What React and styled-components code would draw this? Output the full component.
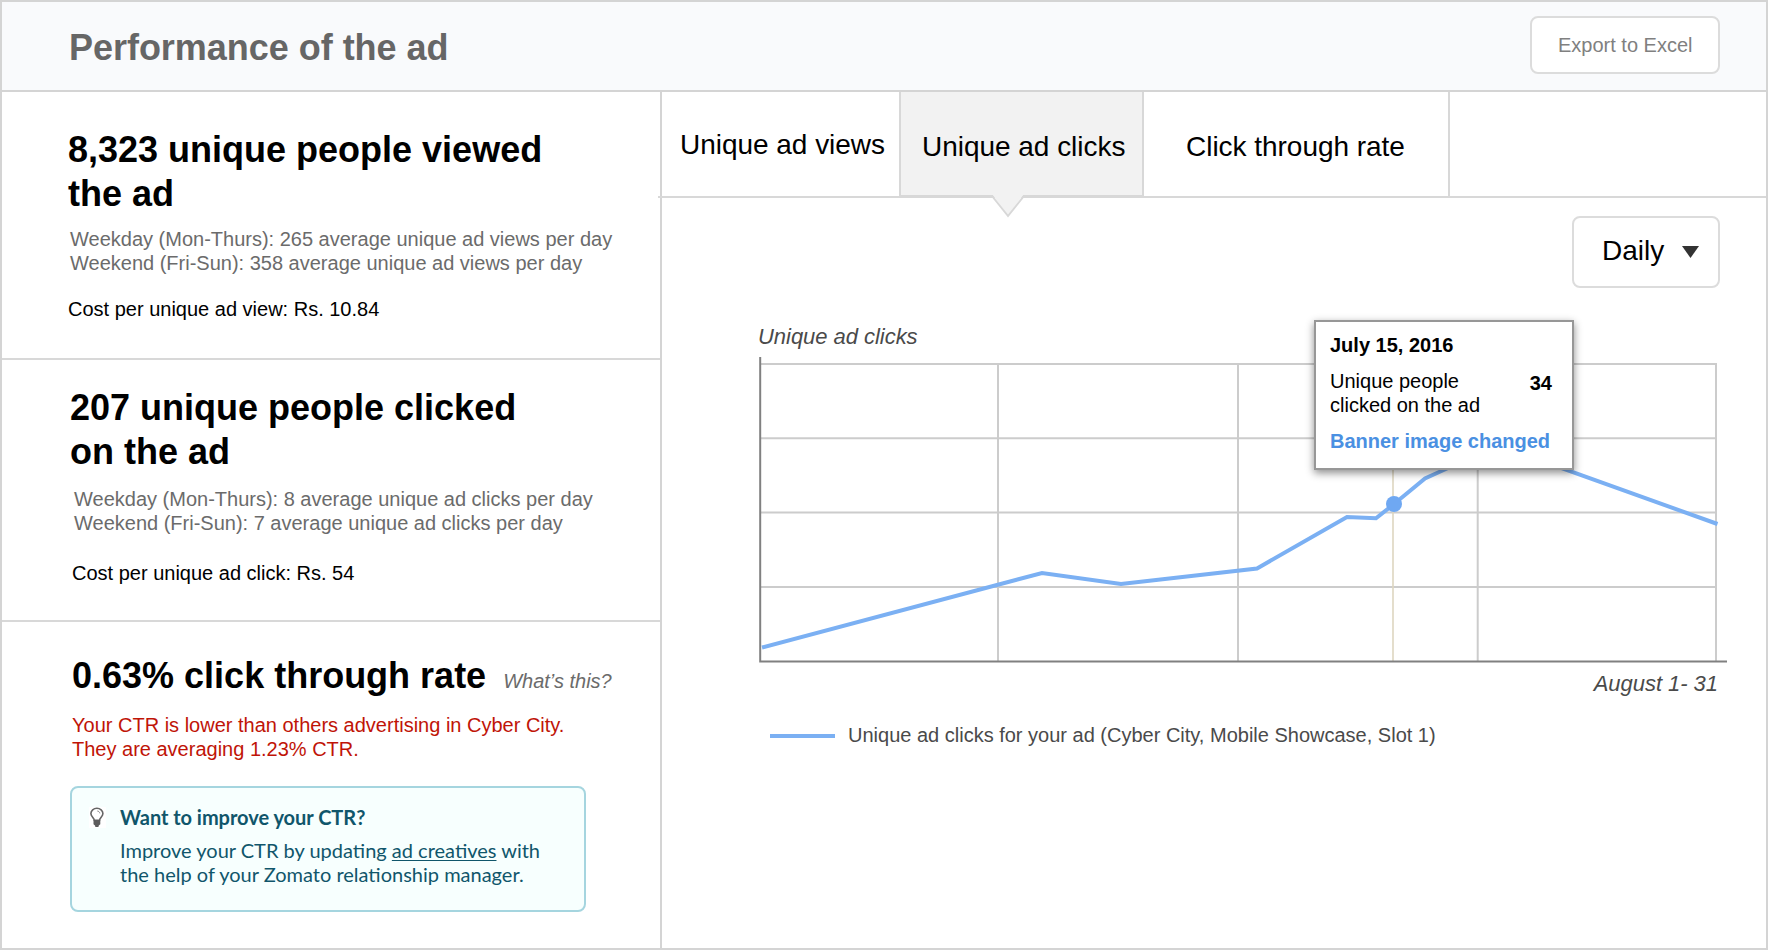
import React from "react";
import styled, { createGlobalStyle } from "styled-components";

const GlobalStyle = createGlobalStyle`
  * { box-sizing: border-box; }
  body { margin: 0; background: #fff; }
  h1, h2, h3, p { margin: 0; }
  button { appearance: none; font: inherit; margin: 0; padding: 0; }
`;

const Page = styled.div`
  width: 1768px;
  height: 950px;
  border: 2px solid #d4d4d4;
  background: #fff;
  color: #000;
  font-family: "Liberation Sans", Arial, sans-serif;
  font-size: 20px;
  line-height: 24px;
  display: flex;
  flex-direction: column;
  overflow: hidden;
`;

const Header = styled.header`
  height: 90px;
  flex: none;
  display: flex;
  justify-content: space-between;
  align-items: flex-start;
  padding: 14px 46px 0 67px;
  background: #f9fafc;
  border-bottom: 2px solid #d4d4d4;
`;

const Title = styled.h1`
  margin-top: 10px;
  font-size: 36px;
  line-height: 44px;
  letter-spacing: -0.03px;
  color: #666;
`;

const OutlineButton = styled.button`
  width: ${(p) => p.$w}px;
  height: ${(p) => p.$h}px;
  padding: 0 0 ${(p) => p.$lift || 0}px ${(p) => p.$inset}px;
  display: flex;
  align-items: center;
  background: #fff;
  border: 2px solid #dcdcdc;
  border-radius: 8px;
  color: ${(p) => p.$color || "#000"};
  font-size: ${(p) => p.$size}px;
`;

const Body = styled.div`
  flex: 1;
  display: flex;
  min-height: 0;
`;

const Summary = styled.aside`
  width: 660px;
  flex: none;
  border-right: 2px solid #d4d4d4;
  display: flex;
  flex-direction: column;
`;

const Section = styled.section`
  height: ${(p) => (p.$h ? `${p.$h}px` : "auto")};
  padding: ${(p) => p.$top}px 0 0 ${(p) => p.$left}px;
  & + & { border-top: 2px solid #d8d8d8; }
`;

const Heading = styled.h2`
  font-size: 36px;
  line-height: 44px;
  white-space: nowrap;
`;

const HeadingRow = styled.div`
  display: flex;
  align-items: baseline;
  gap: 17px;
`;

const Hint = styled.a`
  font-style: italic;
  color: #6b6b6b;
`;

const Text = styled.p`
  margin: ${(p) => p.$gap}px 0 0 ${(p) => p.$indent || 0}px;
  color: ${(p) => p.$color || "#000"};
  white-space: nowrap;
`;

const Tip = styled.div`
  width: 516px;
  height: 126px;
  margin: 25px 0 0 -2px;
  padding: 16px 0 0 17px;
  display: flex;
  gap: 14px;
  background: #f7fffe;
  border: 2px solid #a5d5df;
  border-radius: 8px;
  color: #10566b;
  font-family: Lato, sans-serif;
`;

const BulbIcon = styled.svg`
  width: 17px;
  height: 21px;
  margin-top: 3px;
  flex: none;
`;

const TipTitle = styled.h3`
  margin-top: 1px;
  font-size: 20px;
  line-height: 24px;
  letter-spacing: -0.03px;
`;

const TipText = styled.p`
  margin-top: 9px;
  white-space: nowrap;
`;

const TipLink = styled.a`
  text-decoration: underline;
  text-decoration-thickness: 1px;
  text-underline-offset: 2px;
`;

const Report = styled.main`
  flex: 1;
  display: flex;
  flex-direction: column;
`;

const Tabs = styled.nav`
  height: 106px;
  flex: none;
  display: flex;
  margin-left: -4px;
  padding-left: 4px;
  border-bottom: 2px solid #d8d8d8;
`;

const Tab = styled.button`
  position: relative;
  width: ${(p) => p.$w}px;
  height: ${(p) => (p.$active ? 105 : 104)}px;
  padding: ${(p) => p.$top}px 0 0 ${(p) => p.$left}px;
  display: flex;
  align-items: flex-start;
  white-space: nowrap;
  font-size: 28px;
  line-height: 32px;
  letter-spacing: -0.03px;
  color: #000;
  border: 0 solid #d8d8d8;
  border-right-width: 2px;
  background: #fff;
  ${(p) => p.$active && "background: #f2f2f2; border-bottom-width: 2px;"}
`;

const TabPointer = styled.svg`
  position: absolute;
  left: 90px;
  top: 102px;
  width: 34px;
  height: 24px;
`;

const Content = styled.div`
  padding: 18px 38px 0 96px;
  display: flex;
  flex-direction: column;
`;

const Controls = styled.div`
  display: flex;
  justify-content: flex-end;
  padding-right: 8px;
`;

const Caret = styled.svg`
  width: 17px;
  height: 12px;
  margin: 2px 0 0 18px;
`;

const AxisLabel = styled.div`
  font-size: 22px;
  line-height: 26px;
  font-style: italic;
  letter-spacing: -0.04px;
  color: #4a4a4a;
  margin-top: ${(p) => p.$gap}px;
  text-align: ${(p) => p.$align || "left"};
  padding-right: ${(p) => (p.$align ? 10 : 0)}px;
`;

const ChartArea = styled.div`
  position: relative;
  height: 320px;
  margin-top: -1px;
`;

const Plot = styled.svg`
  display: block;
  width: 970px;
  height: 320px;
`;

const Tooltip = styled.div`
  position: absolute;
  left: 556px;
  top: -29px;
  width: 260px;
  height: 150px;
  padding: 11px 20px 0 14px;
  background: #fff;
  border: 2px solid #979797;
  box-shadow: 0 3px 8px rgba(0, 0, 0, 0.45);
`;

const TooltipRow = styled.div`
  display: flex;
  justify-content: space-between;
  margin-top: 12px;
`;

const TooltipValue = styled.strong`
  margin-top: 2px;
`;

const TooltipNote = styled.strong`
  display: block;
  margin-top: 12px;
  color: #4a90e2;
  white-space: nowrap;
`;

const Legend = styled.div`
  display: flex;
  align-items: center;
  gap: 13px;
  margin-top: 26px;
  padding-left: 12px;
  color: #4a4a4a;
`;

const LegendSwatch = styled.span`
  width: 65px;
  height: 4px;
  margin-top: 2px;
  background: #7bb0f3;
`;

const ROWS = [364, 438.3, 512.6, 587];
const COLUMNS = [998, 1238, 1477.7, 1716];
const SERIES =
  "762,647.5 1042,573 1121,584 1257,568.5 1347,517 1376,518.3 1394,504 1425,478.5 1448,468 1500,446 1717.5,524";

export default function App() {
  return (
    <>
      <GlobalStyle />
      <Page>
        <Header>
          <Title>Performance of the ad</Title>
          <OutlineButton $w={190} $h={58} $inset={26} $size={20} $color="#808080">
            Export to Excel
          </OutlineButton>
        </Header>
        <Body>
          <Summary>
            <Section $h={266} $top={36} $left={66}>
              <Heading>8,323 unique people viewed<br />the ad</Heading>
              <Text $gap={11} $indent={2} $color="#6b6b6b">
                Weekday (Mon-Thurs): 265 average unique ad views per day<br />
                Weekend (Fri-Sun): 358 average unique ad views per day
              </Text>
              <Text $gap={22}>Cost per unique ad view: Rs. 10.84</Text>
            </Section>
            <Section $h={262} $top={26} $left={68}>
              <Heading>207 unique people clicked<br />on the ad</Heading>
              <Text $gap={13} $indent={4} $color="#6b6b6b">
                Weekday (Mon-Thurs): 8 average unique ad clicks per day<br />
                Weekend (Fri-Sun): 7 average unique ad clicks per day
              </Text>
              <Text $gap={26} $indent={2}>Cost per unique ad click: Rs. 54</Text>
            </Section>
            <Section $top={32} $left={70}>
              <HeadingRow>
                <Heading>0.63% click through rate</Heading>
                <Hint>What’s this?</Hint>
              </HeadingRow>
              <Text $gap={15} $color="#c01407">
                Your CTR is lower than others advertising in Cyber City.<br />
                They are averaging 1.23% CTR.
              </Text>
              <Tip>
                <BulbIcon viewBox="0 0 17 21">
                  <rect width="17" height="21" fill="#fff" />
                  <path
                    d="M5.3 13.2C4.9 10.6 1.9 9.4 1.9 6.5a6 5.2 0 0 1 12 0c0 2.9-3 4.1-3.4 6.7z"
                    fill="none"
                    stroke="#666"
                    strokeWidth="1.6"
                  />
                  <path d="M8.3 4c1.4.2 2.3 1 2.5 2.3" fill="none" stroke="#777" strokeWidth="0.9" />
                  <path d="M4.5 13h6.8v4.3l-1.5 1.2-.4 1.4H6.4L6 18.5l-1.5-1.2z" fill="#5c5c5c" />
                </BulbIcon>
                <div>
                  <TipTitle>Want to improve your CTR?</TipTitle>
                  <TipText>
                    Improve your CTR by updating <TipLink>ad creatives</TipLink> with<br />
                    the help of your Zomato relationship manager.
                  </TipText>
                </div>
              </Tip>
            </Section>
          </Summary>
          <Report>
            <Tabs>
              <Tab $w={239} $top={37} $left={18}>Unique ad views</Tab>
              <Tab $active $w={243} $top={39} $left={21}>
                Unique ad clicks
                <TabPointer viewBox="0 0 34 24">
                  <path d="M1 0 17 21.5 33 0z" fill="#f2f2f2" />
                  <path d="M1 2 17 22 33 2" fill="none" stroke="#d8d8d8" strokeWidth="2" />
                </TabPointer>
              </Tab>
              <Tab $w={306} $top={39} $left={42}>Click through rate</Tab>
            </Tabs>
            <Content>
              <Controls>
                <OutlineButton $w={148} $h={72} $inset={28} $size={28} $lift={3}>
                  Daily
                  <Caret viewBox="0 0 17 12"><path d="M0 0h17L8.5 12z" fill="#333" /></Caret>
                </OutlineButton>
              </Controls>
              <AxisLabel $gap={36}>Unique ad clicks</AxisLabel>
              <ChartArea>
                <Plot viewBox="758 349 970 320">
                  <g stroke="#ccc" strokeWidth="2">
                    {ROWS.map((y) => <line key={y} x1="761" x2="1717" y1={y} y2={y} />)}
                    {COLUMNS.map((x) => <line key={x} x1={x} x2={x} y1="364" y2="661" />)}
                  </g>
                  <line x1="1393" x2="1393" y1="460" y2="661" stroke="#ded6c0" strokeWidth="1.6" />
                  <path d="M760.2 357V661.5H1727" fill="none" stroke="#808080" strokeWidth="2" />
                  <polyline points={SERIES} fill="none" stroke="#7bb0f3" strokeWidth="4" />
                  <circle cx="1394" cy="504" r="8" fill="#6fa8f2" />
                </Plot>
                <Tooltip>
                  <strong>July 15, 2016</strong>
                  <TooltipRow>
                    <span>Unique people<br />clicked on the ad</span>
                    <TooltipValue>34</TooltipValue>
                  </TooltipRow>
                  <TooltipNote>Banner image changed</TooltipNote>
                </Tooltip>
              </ChartArea>
              <AxisLabel $gap={2} $align="right">August 1- 31</AxisLabel>
              <Legend>
                <LegendSwatch />
                Unique ad clicks for your ad (Cyber City, Mobile Showcase, Slot 1)
              </Legend>
            </Content>
          </Report>
        </Body>
      </Page>
    </>
  );
}
